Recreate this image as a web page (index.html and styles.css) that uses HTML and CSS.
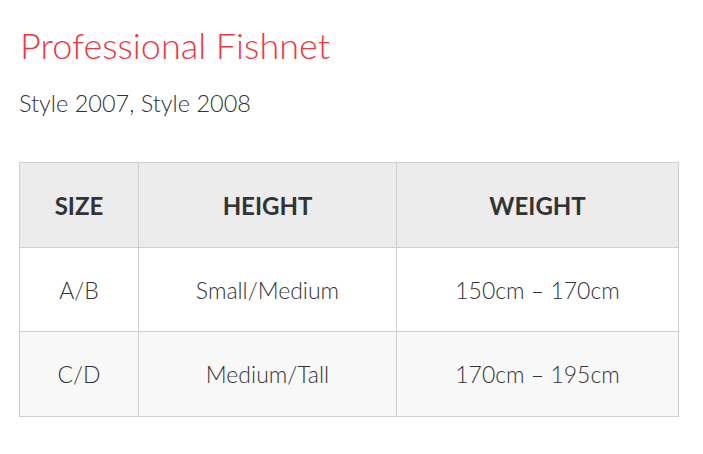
FILE: index.html
```html
<!DOCTYPE html>
<html>
<head>
<meta charset="utf-8">
<link rel="stylesheet" href="styles.css">
</head>
<body>
<div class="page">
  <h1 class="title">Professional Fishnet</h1>
  <p class="subtitle">Style 2007, Style 2008</p>
  <table class="sizes">
    <thead>
      <tr><th class="c1">SIZE</th><th class="c2">HEIGHT</th><th class="c3">WEIGHT</th></tr>
    </thead>
    <tbody>
      <tr><td>A/B</td><td>Small/Medium</td><td>150cm – 170cm</td></tr>
      <tr class="alt"><td>C/D</td><td>Medium/Tall</td><td>170cm – 195cm</td></tr>
    </tbody>
  </table>
</div>
</body>
</html>
```
FILE: styles.css
```css
html, body { margin: 0; padding: 0; background: #fff; }
body { font-family: Lato, "Open Sans", sans-serif; color: #333; }
.page { padding: 22px 24px 0 19px; }
.title {
  margin: 0;
  font-weight: 300;
  font-size: 36px;
  line-height: 46px;
  color: #f0373f;
  padding-left: 1px;
}
.subtitle {
  margin: 20px 0 0 0;
  font-weight: 300;
  font-size: 23.5px;
  line-height: 30px;
  color: #333;
}
.sizes {
  margin-top: 44px;
  border-collapse: collapse;
  width: 660px;
}
.sizes th, .sizes td {
  border: 1px solid #cfcfcf;
  text-align: center;
  vertical-align: middle;
  padding: 0;
}
.sizes th {
  height: 84px;
  background: #ececec;
  font-weight: 700;
  font-size: 24px;
  color: #333;
}
.sizes td {
  height: 83px;
  font-weight: 300;
  font-size: 23px;
  color: #333;
}
.sizes tr.alt td { background: #f8f8f8; height: 84px; }
.c1 { width: 118px; }
.c2 { width: 257px; }
.c3 { width: 281px; }
```
